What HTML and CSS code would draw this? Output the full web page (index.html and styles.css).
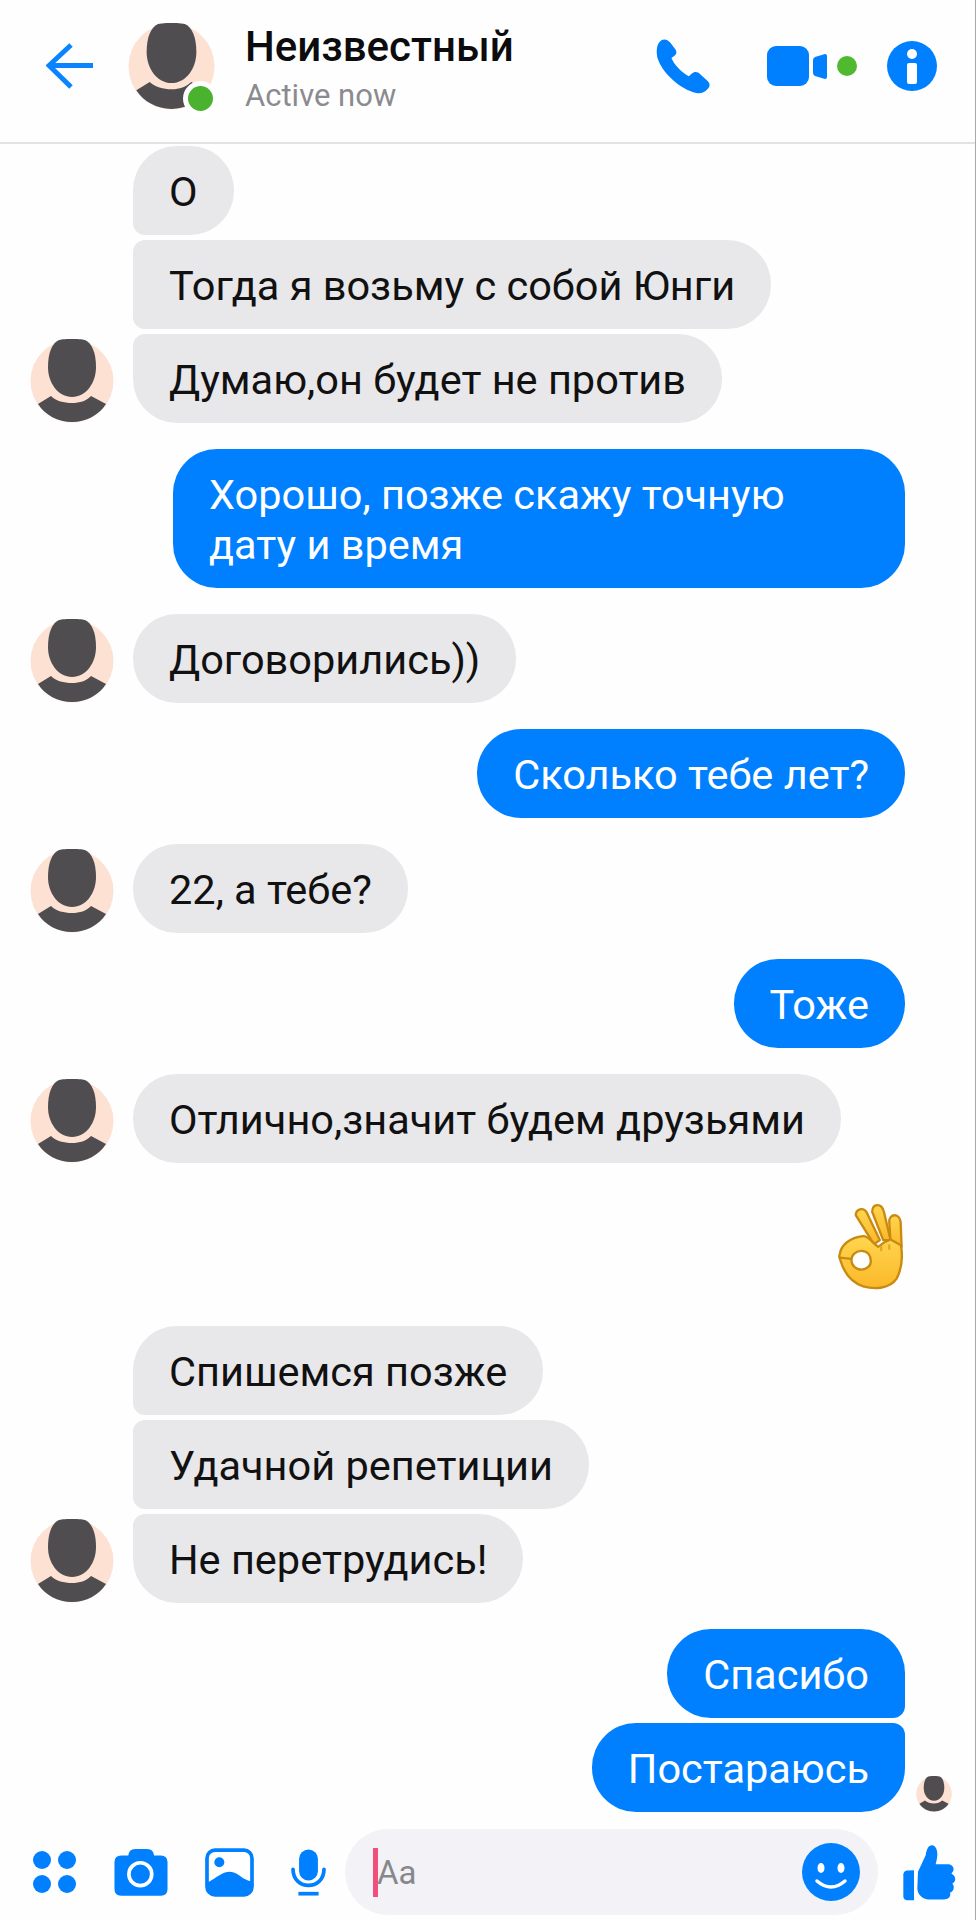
FILE: index.html
```html
<!DOCTYPE html>
<html lang="ru">

<head>
  <meta charset="UTF-8">
  <meta name="viewport" content="width=device-width, initial-scale=1.0">
  <title>Неизвестный</title>
  <link rel="stylesheet" href="styles.css">
</head>

<body>
  <!-- shared avatar picture -->
  <svg class="defs" aria-hidden="true">
    <symbol id="person" viewBox="0 0 84 84">
      <circle cx="42" cy="42" r="41.5" fill="#fde1d3" />
      <path fill="#4f4d50" d="M29 1C35 -.5 49 -.5 55 1C62 4 66 14 66 28C66 44 56 58 42 58C28 58 18 44 18 28C18 14 22 4 29 1Z" />
      <path fill="#4f4d50" d="M8 65L21 57C26 62 34 64 42 64C50 64 56 62 61 57L76 65C69 76 56 83 42 83C28 83 15 76 8 65Z" />
    </symbol>
  </svg>

  <header class="top">
    <svg class="back" viewBox="0 0 47 46">
      <path d="M47 22.500H3M25 2L3 22.500L25 44" fill="none" stroke="#0a84ff" stroke-width="5" />
    </svg>
    <div class="top-avatar">
      <svg class="top-pic"><use href="#person" /></svg>
      <span class="online"></span>
    </div>
    <div class="top-name">
      <h1>Неизвестный</h1>
      <p>Active now</p>
    </div>
    <svg class="phone" viewBox="165 112 170 170">
      <path fill="#0080ff" d="M185 118C195 114 205 118 212 128L226 146C231 153 229 160 223 165L214 172C222 192 245 216 266 226L275 218C281 212 288 212 295 216L322 240C330 248 330 256 322 264C312 275 300 279 288 276C240 265 185 215 172 170C168 148 170 128 185 118Z" />
    </svg>
    <svg class="video" viewBox="0 0 91 41">
      <rect x="0" y="0" width="42" height="40" rx="9" fill="#0080ff" />
      <path fill="#0080ff" d="M46 14Q46 12 48 11L58 8Q60 8 60 10V31Q60 33 58 33L48 30Q46 29 46 27Z" />
      <circle cx="80" cy="20" r="10" fill="#4fba2f" />
    </svg>
    <svg class="info" viewBox="0 0 50 50">
      <circle cx="25" cy="25" r="25" fill="#0080ff" />
      <circle cx="25" cy="13" r="5" fill="#fff" />
      <rect x="20" y="22" width="10" height="21" rx="2" fill="#fff" />
    </svg>
  </header>

  <main class="chat">
    <section class="group">
      <div class="row in"><div class="slot"></div><div class="bubble first">О</div></div>
      <div class="row in"><div class="slot"></div><div class="bubble mid">Тогда я возьму с собой Юнги</div></div>
      <div class="row in"><svg class="pic"><use href="#person" /></svg><div class="bubble last">Думаю,он будет не против</div></div>
    </section>

    <section class="group">
      <div class="row out"><div class="bubble me wide">Хорошо, позже скажу точную<br>дату и время</div></div>
    </section>

    <section class="group">
      <div class="row in"><svg class="pic"><use href="#person" /></svg><div class="bubble">Договорились))</div></div>
    </section>

    <section class="group">
      <div class="row out"><div class="bubble me">Сколько тебе лет?</div></div>
    </section>

    <section class="group">
      <div class="row in"><svg class="pic"><use href="#person" /></svg><div class="bubble">22, а тебе?</div></div>
    </section>

    <section class="group">
      <div class="row out"><div class="bubble me">Тоже</div></div>
    </section>

    <section class="group">
      <div class="row in"><svg class="pic"><use href="#person" /></svg><div class="bubble">Отлично,значит будем друзьями</div></div>
    </section>

    <section class="group">
      <div class="row emoji-row">
        <svg class="emoji" viewBox="112 66 200 266">
          <defs>
            <linearGradient id="hand" x1="0" y1="0" x2="0" y2="1">
              <stop offset="0" stop-color="#ffd64f" />
              <stop offset="1" stop-color="#fbb829" />
            </linearGradient>
          </defs>
          <g fill="url(#hand)" stroke="#c98a12" stroke-width="7" stroke-linejoin="round">
            <path d="M168 105C168 88 190 80 200 96L240 180L222 192Z" />
            <path d="M217 95C218 70 245 68 252 95L272 180H250Z" />
            <path d="M268 125C268 100 298 98 302 125L305 200L272 185Z" />
            <path fill-rule="evenodd" d="M120 222C124 195 150 172 190 168C205 167 215 185 235 200L255 185L272 178L303 195C308 225 306 265 290 295C270 325 225 328 190 318C160 308 135 285 122 240C118 232 117 228 120 222ZM155 240C155 222 170 212 185 212C205 212 213 228 213 242C213 258 200 268 185 268C168 268 155 255 155 240Z" />
            <path d="M120 232L155 236" fill="none" />
          </g>
          <path d="M244 200v10M268 196v10" stroke="#e8a526" stroke-width="7" stroke-linecap="round" />
        </svg>
      </div>
    </section>

    <section class="group">
      <div class="row in"><div class="slot"></div><div class="bubble first">Спишемся позже</div></div>
      <div class="row in"><div class="slot"></div><div class="bubble mid">Удачной репетиции</div></div>
      <div class="row in"><svg class="pic"><use href="#person" /></svg><div class="bubble last">Не перетрудись!</div></div>
    </section>

    <section class="group">
      <div class="row out"><div class="bubble me me-first">Спасибо</div></div>
      <div class="row out seen"><div class="bubble me me-last">Постараюсь</div><svg class="seen-pic"><use href="#person" /></svg></div>
    </section>
  </main>

  <footer class="bar">
    <svg class="b-dots" viewBox="0 0 43 44">
      <circle cx="9" cy="10" r="9" /><circle cx="34" cy="10" r="9" />
      <circle cx="9" cy="34" r="9" /><circle cx="34" cy="34" r="9" />
    </svg>
    <svg class="b-camera" viewBox="344 203 158 140">
      <path d="M385 222Q388 203 405 203H442Q459 203 462 222H482Q502 222 502 242V322Q502 342 482 342H364Q344 342 344 322V242Q344 222 364 222Z" />
      <circle cx="421" cy="278" r="34" fill="none" stroke="#fff" stroke-width="11" />
    </svg>
    <svg class="b-image" viewBox="615 201 147 146">
      <rect x="621" y="207" width="135" height="134" rx="24" fill="#fff" stroke="#0080ff" stroke-width="11" />
      <circle cx="658" cy="243" r="15" />
      <path d="M622 305C650 290 665 272 690 272C715 272 730 300 755 300V318Q755 342 730 342H647Q622 342 622 318Z" />
    </svg>
    <svg class="b-mic" viewBox="874 206 104 139">
      <rect x="898" y="207" width="56" height="92" rx="28" />
      <path d="M880 266C880 330 972 330 972 266" fill="none" stroke="#0080ff" stroke-width="11" stroke-linecap="round" />
      <rect x="896" y="333" width="60" height="11" />
    </svg>
    <div class="input">
      <span class="cursor"></span>
      <span class="placeholder">Aa</span>
      <svg class="b-smile" viewBox="0 0 58 58">
        <circle cx="29" cy="29" r="29" fill="#0080ff" />
        <ellipse cx="19" cy="25" rx="3.500" ry="5" fill="#fff" />
        <ellipse cx="39" cy="25" rx="3.500" ry="5" fill="#fff" />
        <path d="M15 38Q29 50 43 38" fill="none" stroke="#fff" stroke-width="3.500" stroke-linecap="round" />
      </svg>
    </div>
    <svg class="b-like" viewBox="904 312 162 170">
      <path d="M908 402Q910 392 920 391L940 390V480H918Q910 480 908 470Z" />
      <path d="M952 395L975 345C978 325 985 312 998 316C1012 322 1013 345 1005 372H1045C1062 376 1062 392 1052 400C1068 408 1066 425 1055 430C1064 442 1058 455 1048 458C1052 470 1042 478 1030 478H985C965 478 950 462 950 445Z" />
    </svg>
  </footer>
</body>

</html>
```

FILE: styles.css
```css
html {
  box-sizing: border-box;
  font-family: 'Roboto', 'Liberation Sans', sans-serif;
  font-size: 16px;
}

*,
*::before,
*::after {
  box-sizing: inherit;
}

body {
  display: flex;
  flex-direction: column;
  width: 976px;
  height: 1920px;
  margin: 0;
  overflow: hidden;
  background-color: #fefeff;
  border-right: 1px solid #a9a9ab;
}

.defs {
  display: none;
}

svg {
  display: block;
  flex: none;
}

/* header */
.top {
  display: flex;
  align-items: center;
  flex: none;
  height: 144px;
  padding: 0 38px 10px 46px;
  border-bottom: 2px solid #e3e1e6;
}

.back {
  width: 47px;
  height: 46px;
  margin-right: 35px;
}

.top-avatar {
  position: relative;
  flex: none;
  width: 87px;
  height: 87px;
  margin-right: 30px;
}

.top-pic {
  width: 87px;
  height: 87px;
}

.online {
  position: absolute;
  right: -3px;
  bottom: -6px;
  width: 35px;
  height: 35px;
  border: 5px solid #fff;
  border-radius: 50%;
  background-color: #4bb22f;
}

.top-name {
  flex: 1;
  padding-top: 5px;
}

.top-name h1 {
  margin: 0;
  font-size: 42px;
  font-weight: 500;
  line-height: 46px;
  color: #0c0c0e;
}

.top-name p {
  margin: 8px 0 0;
  font-size: 31px;
  line-height: 36px;
  color: #8b8b8f;
}

.phone {
  width: 57px;
  height: 57px;
  margin-right: 55px;
}

.video {
  width: 91px;
  height: 41px;
  margin-right: 29px;
}

.info {
  width: 50px;
  height: 50px;
}

/* messages */
.chat {
  flex: 1;
  display: flex;
  flex-direction: column;
  gap: 26px;
  padding-top: 2px;
  overflow: hidden;
}

.group {
  display: flex;
  flex-direction: column;
  gap: 5px;
}

.row {
  display: flex;
  align-items: flex-end;
}

.in {
  gap: 19px;
  padding-left: 30px;
}

.out {
  justify-content: flex-end;
  padding-right: 70px;
}

.slot,
.pic {
  flex: none;
  width: 84px;
  height: 84px;
}

.bubble {
  padding: 21px 36px 18px;
  border-radius: 44px;
  font-size: 41.500px;
  line-height: 50px;
  color: #111;
  background-color: #e8e7ea;
}

.first {
  border-bottom-left-radius: 12px;
}

.mid {
  border-top-left-radius: 12px;
  border-bottom-left-radius: 12px;
}

.last {
  border-top-left-radius: 12px;
}

.me {
  color: #fff;
  background-color: #0080ff;
}

.wide {
  width: 732px;
}

.me-first {
  border-bottom-right-radius: 12px;
}

.me-last {
  border-top-right-radius: 12px;
}

.seen {
  padding-right: 23px;
}

.seen-pic {
  width: 36px;
  height: 36px;
  margin-left: 11px;
}

.emoji-row {
  justify-content: flex-end;
  align-items: center;
  height: 111px;
  padding: 3px 71px 0 0;
}

.emoji {
  width: 67px;
  height: 89px;
}

/* bottom bar */
.bar {
  display: flex;
  align-items: center;
  flex: none;
  height: 86px;
  margin-bottom: 5px;
  padding-left: 33px;
  fill: #0080ff;
}

.b-dots {
  width: 43px;
  height: 44px;
  margin-right: 38px;
}

.b-camera {
  width: 54px;
  height: 47px;
  margin-right: 37px;
}

.b-image {
  width: 49px;
  height: 49px;
  margin-right: 37px;
}

.b-mic {
  width: 35px;
  height: 47px;
  margin-right: 19px;
}

.input {
  display: flex;
  align-items: center;
  width: 533px;
  height: 86px;
  margin-right: 24px;
  padding: 0 18px 0 28px;
  border-radius: 43px;
  background-color: #f3f2f7;
}

.cursor {
  width: 5px;
  height: 49px;
  background-color: #f0507a;
}

.placeholder {
  flex: 1;
  margin-left: -1px;
  font-size: 33px;
  color: #88888c;
}

.b-smile {
  width: 58px;
  height: 58px;
}

.b-like {
  width: 54px;
  height: 57px;
}
```
